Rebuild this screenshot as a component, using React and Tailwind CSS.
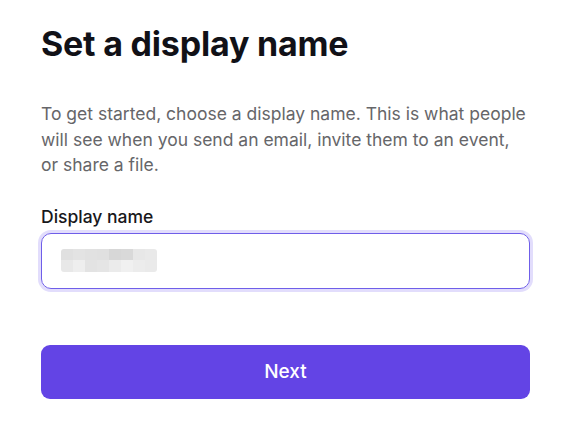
import React from "react";

const row1 = ["#e0e0e0", "#e3e3e3", "#e1e1e1", "#e0e0e0", "#d7d7d7", "#d9d9d9", "#e7e7e7", "#e9e9e9"];
const row2 = ["#e8e8e8", "#eeeeee", "#e3e3e3", "#e5e5e5", "#ebebeb", "#f0f0f0", "#ececec", "#eaeaea"];

export default function App() {
  return (
    <div
      className="min-h-[443px] w-[575px] bg-white pl-[41px] pt-[24px]"
      style={{ fontFamily: "Inter, 'Noto Sans', sans-serif" }}
    >
      <div className="w-[489px]">
        <h1 className="text-[34px] font-bold leading-[40px] tracking-[-0.2px] text-[#111117]">
          Set a display name
        </h1>
        <p className="mt-[37px] text-[17.5px] leading-[25.5px] text-[#666669]">
          To get started, choose a display name. This is what people will see when you send an email, invite them to an event, or share a file.
        </p>
        <label className="mt-[27px] block text-[17.5px] font-medium leading-[24px] text-[#18181b]">
          Display name
        </label>
        <div className="mt-[4px] flex h-[56px] items-center rounded-[10px] border border-[#6f5ee9] px-[19px] shadow-[0_0_0_3px_#e2ddfc]">
          <div className="flex flex-col overflow-hidden rounded-[3px]">
            <div className="flex">
              {row1.map((c, i) => (
                <div key={i} className="h-[11px] w-[12px]" style={{ backgroundColor: c }} />
              ))}
            </div>
            <div className="flex">
              {row2.map((c, i) => (
                <div key={i} className="h-[12px] w-[12px]" style={{ backgroundColor: c }} />
              ))}
            </div>
          </div>
        </div>
        <button className="mt-[56px] flex h-[54px] w-full items-center justify-center rounded-[9px] bg-[#6344e5] pt-[2px] text-[19px] font-medium text-white">
          Next
        </button>
      </div>
    </div>
  );
}
